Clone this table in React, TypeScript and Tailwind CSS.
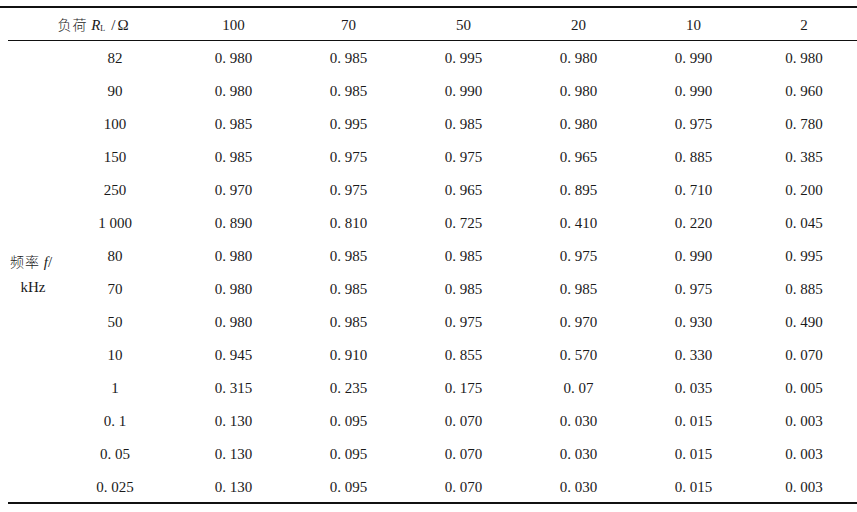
const heads = ['100', '70', '50', '20', '10', '2'];

const rows: [string, string[]][] = [
  ['82', ['0. 980', '0. 985', '0. 995', '0. 980', '0. 990', '0. 980']],
  ['90', ['0. 980', '0. 985', '0. 990', '0. 980', '0. 990', '0. 960']],
  ['100', ['0. 985', '0. 995', '0. 985', '0. 980', '0. 975', '0. 780']],
  ['150', ['0. 985', '0. 975', '0. 975', '0. 965', '0. 885', '0. 385']],
  ['250', ['0. 970', '0. 975', '0. 965', '0. 895', '0. 710', '0. 200']],
  ['1 000', ['0. 890', '0. 810', '0. 725', '0. 410', '0. 220', '0. 045']],
  ['80', ['0. 980', '0. 985', '0. 985', '0. 975', '0. 990', '0. 995']],
  ['70', ['0. 980', '0. 985', '0. 985', '0. 985', '0. 975', '0. 885']],
  ['50', ['0. 980', '0. 985', '0. 975', '0. 970', '0. 930', '0. 490']],
  ['10', ['0. 945', '0. 910', '0. 855', '0. 570', '0. 330', '0. 070']],
  ['1', ['0. 315', '0. 235', '0. 175', '0. 07', '0. 035', '0. 005']],
  ['0. 1', ['0. 130', '0. 095', '0. 070', '0. 030', '0. 015', '0. 003']],
  ['0. 05', ['0. 130', '0. 095', '0. 070', '0. 030', '0. 015', '0. 003']],
  ['0. 025', ['0. 130', '0. 095', '0. 070', '0. 030', '0. 015', '0. 003']],
];

export default function App() {
  return (
    <div className="w-[857px] h-[512px] bg-white pt-[6px] text-[15px] text-[#1a1a1a] font-['Liberation_Serif','Noto_Sans_CJK_SC',serif] overflow-hidden">
      {/* top rule */}
      <div className="h-[2px] bg-[#111]" />
      <div className="pl-2">
        <table className="w-[849px] table-fixed border-collapse">
          <colgroup>
            <col className="w-[56px]" />
            <col className="w-[112px]" />
            <col className="w-[115px]" />
            <col className="w-[115px]" />
            <col className="w-[115px]" />
            <col className="w-[115px]" />
            <col className="w-[115px]" />
            <col className="w-[106px]" />
          </colgroup>
          <thead>
            <tr className="h-[32px] border-b-[1.5px] border-[#111]">
              <th colSpan={2} className="font-normal text-center p-0 pt-[3px] pl-[2px] leading-none">
                <span className="font-['Noto_Sans_CJK_SC',sans-serif] font-light text-[14px] tracking-[1px]">负荷</span>{' '}
                <span className="italic">R</span>
                <span className="text-[8px] align-[-1px]">L</span>
                <span className="ml-[6px]">/</span>
                <span className="ml-[2px]">Ω</span>
              </th>
              {heads.map((h) => (
                <th key={h} className="font-normal text-center p-0 pt-[3px] leading-none">{h}</th>
              ))}
            </tr>
          </thead>
          <tbody>
            {rows.map(([label, vals], i) => (
              <tr key={i} className="h-[33px]">
                {i === 0 && (
                  <td rowSpan={rows.length} className="align-middle text-center p-0 pt-[6px] leading-[25px]">
                    <div className="-ml-[10px]">
                      <span className="font-['Noto_Sans_CJK_SC',sans-serif] font-light text-[14px] tracking-[1px]">频率</span>{' '}
                      <span className="italic">f</span>/
                    </div>
                    <div className="-ml-[6px]">kHz</div>
                  </td>
                )}
                <td className="text-center p-0 pt-[3px] pr-[10px] leading-none">{label}</td>
                {vals.map((v, j) => (
                  <td key={j} className="text-center p-0 pt-[3px] leading-none">{v}</td>
                ))}
              </tr>
            ))}
          </tbody>
        </table>
        <div className="h-[2px] bg-[#111]" />
      </div>
    </div>
  );
}
